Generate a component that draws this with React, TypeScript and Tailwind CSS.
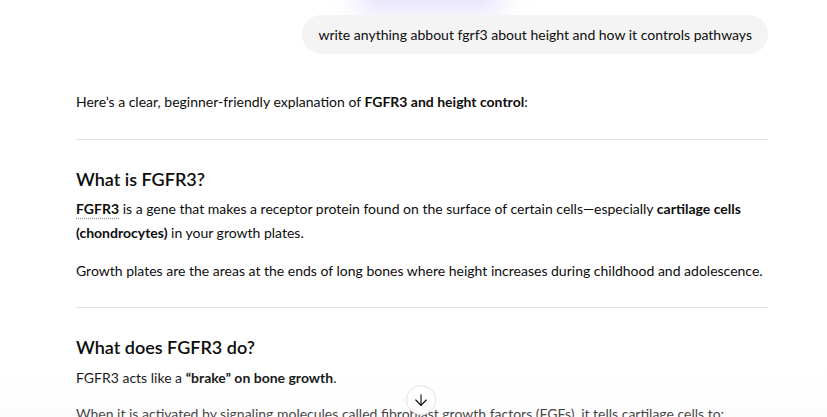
import { ArrowDown } from "lucide-react";

const Divider = () => <div className="h-px w-full bg-[#e3e3e3]" />;

export default function App() {
  return (
    <div className="relative h-[417px] w-full overflow-hidden bg-white font-['Lato',sans-serif] text-[14px] leading-6 text-[#0d0d0d]">
      {/* soft glow behind the top of the thread */}
      <div className="pointer-events-none absolute left-[355px] top-[-24px] h-[38px] w-[150px] rounded-full bg-[#e4e2fb] blur-[14px]" />

      <div className="relative ml-[76px] flex w-[692px] flex-col">
        <div className="mt-[15px] flex justify-end">
          <div className="flex h-[39px] items-center rounded-full bg-[#f4f4f4] px-[16px]">
            write anything abbout fgrf3 about height and how it controls pathways
          </div>
        </div>

        <p className="mt-[36px]">
          Here’s a clear, beginner-friendly explanation of <b>FGFR3 and height control</b>:
        </p>

        <div className="mt-[25px]">
          <Divider />
        </div>

        <h3 className="mt-[25px] text-[18px] font-semibold leading-7">What is FGFR3?</h3>
        <p className="mt-[4px]">
          <b className="underline decoration-[#9a9a9a] decoration-dotted underline-offset-[4px]">FGFR3</b> is a gene
          that makes a receptor protein found on the surface of certain cells—especially{" "}
          <b>cartilage cells (chondrocytes)</b> in your growth plates.
        </p>
        <p className="mt-[14px]">
          Growth plates are the areas at the ends of long bones where height increases during childhood and adolescence.
        </p>

        <div className="mt-[24px]">
          <Divider />
        </div>

        <h3 className="mt-[25px] text-[18px] font-semibold leading-7">What does FGFR3 do?</h3>
        <p className="mt-[5px]">
          FGFR3 acts like a <b>“brake” on bone growth</b>.
        </p>
        <p className="mt-[12px]">
          When it is activated by signaling molecules called fibroblast growth factors (FGFs), it tells cartilage cells to:
        </p>
      </div>

      {/* faint shade at the bottom of the scroll area */}
      <div className="pointer-events-none absolute inset-x-0 bottom-0 h-[50px] bg-gradient-to-b from-white/0 to-[#f5f5f5]/25" />

      <button className="absolute left-[406px] top-[385px] flex h-[30px] w-[30px] items-center justify-center rounded-full border border-[#e3e3e3] bg-white text-[#0d0d0d]">
        <ArrowDown size={18} strokeWidth={1.5} />
      </button>
    </div>
  );
}
